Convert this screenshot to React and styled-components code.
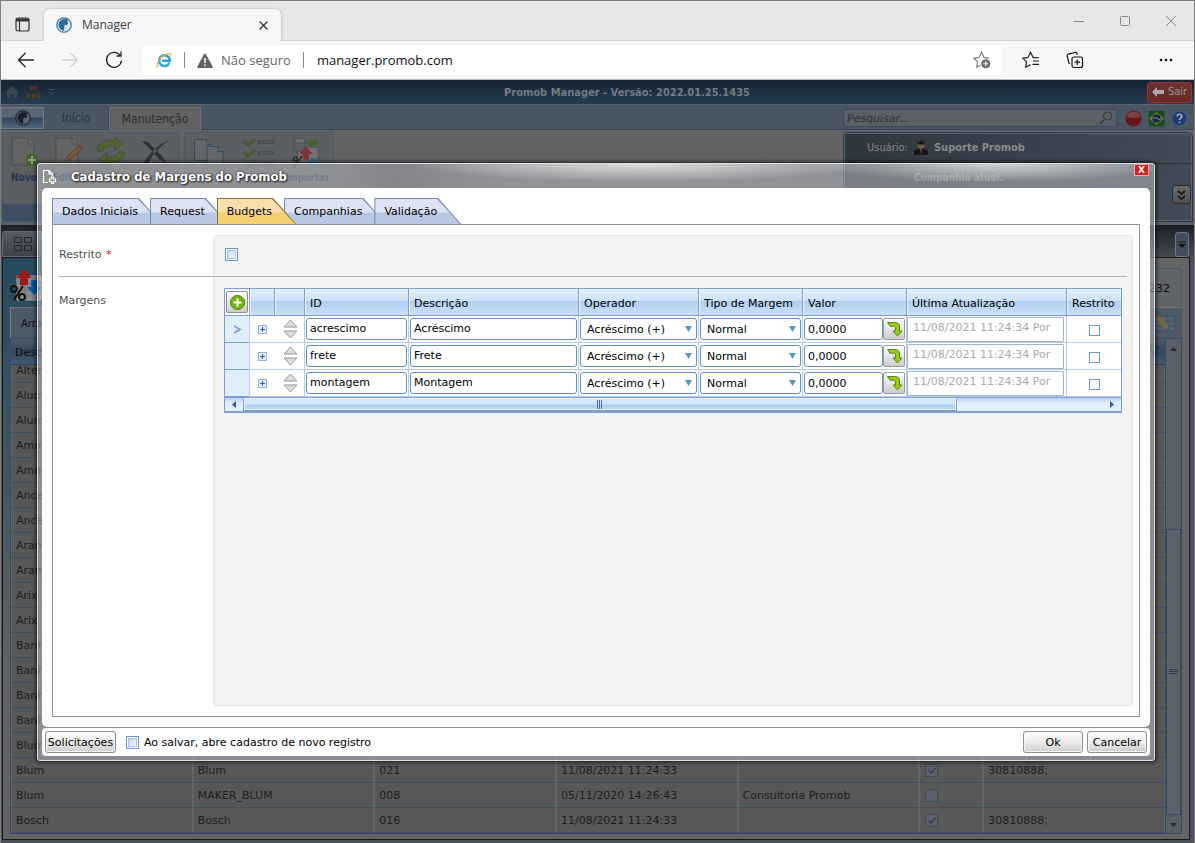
import React from 'react';
import styled, { createGlobalStyle, css } from 'styled-components';

const GlobalStyle = createGlobalStyle`
  *, *::before, *::after { box-sizing: border-box; }
  body { margin: 0; background: #e7e7e7; }
  body, button, input, select, table { font-family: "DejaVu Sans", "Verdana", sans-serif; font-size: 11px; }
  button { padding: 0; border: 0; background: none; color: inherit; cursor: pointer; }
  svg { display: block; flex: none; }
`;

/* ---------- Browser window ---------- */

const Window = styled.div`
  display: flex;
  flex-direction: column;
  min-height: 100vh;
  border: 1px solid #7f7f7f;
  border-bottom: 0;
`;

const TabStrip = styled.div`
  display: flex;
  align-items: flex-end;
  height: 40px;
  background: #e7e7e7;
  border-bottom: 1px solid #d4d4d4;
`;

const StripButton = styled.button`
  display: grid;
  place-items: center;
  width: 43px;
  height: 32px;
`;

const BrowserTab = styled.div`
  display: flex;
  align-items: center;
  gap: 10px;
  width: 237px;
  height: 32px;
  padding: 0 11px 0 12px;
  margin-bottom: -1px;
  border-radius: 6px 6px 0 0;
  background: #f7f7f7;
  box-shadow: 0 0 3px rgba(0, 0, 0, 0.25);
  clip-path: inset(-4px -4px 0 -4px);
  color: #3b3b3b;
  font: 12px/16px "Open Sans", "Noto Sans", sans-serif;

  span { flex: 1; }
`;

const WindowControls = styled.div`
  display: flex;
  align-self: center;
  margin-left: auto;

  button { display: grid; place-items: center; width: 46px; height: 32px; }
`;

const Toolbar = styled.div`
  display: flex;
  align-items: center;
  height: 39px;
  padding-right: 6px;
  background: #f7f7f7;
  border-bottom: 1px solid #bdbdbd;
`;

const ToolButton = styled.button`
  display: grid;
  place-items: center;
  width: 44px;
  height: 32px;
  margin-left: ${(p) => p.$push || 0}px;
`;

const AddressBar = styled.div`
  display: flex;
  flex: 1;
  align-items: center;
  gap: 12px;
  height: 30px;
  margin: 0 7px 0 6px;
  padding: 0 11px 0 14px;
  border-radius: 4px;
  background: #fff;
  color: #666;
  font: 13px/20px "Open Sans", "Noto Sans", sans-serif;

  i { width: 1px; height: 16px; background: #8a8a8a; }
`;

const Warning = styled.span`
  display: flex;
  align-items: center;
  gap: 8px;
`;

const Address = styled.input`
  flex: 1;
  min-width: 0;
  padding: 0 1px;
  border: 0;
  outline: 0;
  background: none;
  color: #111;
  font: 13px/20px "Open Sans", "Noto Sans", sans-serif;
`;

/* ---------- Application behind the dialog ---------- */

const Page = styled.main`
  position: relative;
  display: flex;
  flex: 1;
  flex-direction: column;
  background: #4c525c;
  color: #1a1c1f;
`;

const TitleBar = styled.header`
  display: grid;
  grid-template-columns: 1fr auto 1fr;
  align-items: center;
  height: 25px;
  padding: 0 2px 0 4px;
  background: linear-gradient(#16222f, #253c52);
  border-bottom: 1px solid #5c646d;
`;

const QuickIcons = styled.div`
  display: flex;
  align-items: center;
  gap: 7px;
`;

const AppTitle = styled.h1`
  margin: 0 0 0 57px;
  padding-top: 2px;
  color: #737b83;
  font: bold 11px/14px "DejaVu Sans Condensed", "DejaVu Sans", sans-serif;
`;

const LogoutButton = styled.button`
  display: flex;
  align-items: center;
  justify-content: center;
  justify-self: end;
  gap: 4px;
  width: 45px;
  height: 21px;
  border: 1px solid #9b3535;
  border-radius: 3px;
  background: linear-gradient(#6b3434, #6b2525);
  color: #999;
  font: 11px/14px "DejaVu Sans Condensed", sans-serif;
`;

const MenuRow = styled.nav`
  display: flex;
  align-items: center;
  height: 25px;
  padding: 2px 6px 0 0;
  background: #4b5663;
  border-bottom: 1px solid #33475f;
`;

const MenuTab = styled.button`
  display: grid;
  place-items: center;
  align-self: flex-end;
  width: ${(p) => p.$w}px;
  height: 22px;
  color: #24313f;
  font: 12px/16px "DejaVu Sans Condensed", sans-serif;
  border-right: 1px solid #33475f;
  ${(p) => p.$logo && css`
    border: 1px solid #6f7d8d;
    background: linear-gradient(#5a6674 45%, #34465c 50%, #52657a);
  `}
  ${(p) => p.$active && css`
    height: 23px;
    margin-bottom: -1px;
    border: 1px solid #707173;
    border-bottom: 0;
    border-radius: 2px 2px 0 0;
    background: #606264;
    color: #2c2c2c;
  `}
`;

const SearchBox = styled.label`
  display: flex;
  align-items: center;
  width: 274px;
  height: 18px;
  margin: 0 8px 0 auto;
  padding: 0 3px;
  border: 1px solid #364a60;
  border-radius: 3px;
  background: #5b6066;

  input {
    flex: 1;
    min-width: 0;
    padding: 1px 0 0;
    border: 0;
    background: none;
    font: italic 11px/14px "DejaVu Sans", sans-serif;
  }
  input::placeholder { color: #2e343b; opacity: 1; }
`;

const RoundIcons = styled.div`
  display: flex;
  gap: 6px;
`;

const Ribbon = styled.section`
  display: flex;
  gap: 5px;
  height: 95px;
  padding: 2px 1px 3px 1px;
  background: linear-gradient(#636464, #5a5f64);
`;

const RibbonGroup = styled.div`
  display: flex;
  width: ${(p) => p.$w}px;
  padding-top: 4px;
  border: 1px solid #475a72;
  border-radius: 2px;
  background: linear-gradient(#5c5f62 80%, #3f4e62 81%);
`;

const RibbonItem = styled.button`
  display: flex;
  flex: 1;
  flex-direction: column;
  align-items: center;
  gap: 4px;
  min-width: 0;
  height: 50px;
  padding-right: 2px;
  color: #26344f;
  font: bold 10px/13px "DejaVu Sans Condensed", sans-serif;

  svg { opacity: 0.8; }
`;

const UserPanel = styled.aside`
  display: flex;
  flex-direction: column;
  width: 350px;
  margin-left: auto;
  border: 1px solid #26364a;
  border-radius: 5px 5px 0 0;
  background: linear-gradient(100deg, #2f3640, #424b57);
  box-shadow: inset 0 0 0 1px #5d6773;
  color: #868a8f;
  font: 11px/14px "DejaVu Sans Condensed", sans-serif;
`;

const UserLine = styled.div`
  display: flex;
  align-items: center;
  gap: 5px;
  height: 31px;
  padding-left: 23px;
  border-bottom: 1px solid #26303b;
`;

const CompanyLine = styled.div`
  display: flex;
  flex-direction: column;
  padding: 7px 1px 0 70px;
  font-weight: bold;
  font-size: 10px;
  color: #6f747b;
`;

const SmallButton = styled.button`
  display: grid;
  place-items: center;
  width: ${(p) => p.$w || 19}px;
  height: ${(p) => p.$h || 19}px;
  align-self: flex-end;
  border: 1px solid ${(p) => (p.$dark ? '#71767e' : '#2b2e31')};
  border-radius: 3px;
  background: ${(p) => (p.$dark ? '#424c5b' : 'linear-gradient(#6a6a6a, #505050)')};
`;

const DocumentTabs = styled.div`
  display: flex;
  align-items: flex-end;
  justify-content: space-between;
  height: 32px;
  padding: 0 5px 0 1px;
  background: linear-gradient(#1c2028, #454a52);
`;

const DocumentTab = styled.button`
  display: flex;
  align-items: center;
  width: 90px;
  height: 26px;
  padding-left: 11px;
  border: 1px solid #666b73;
  border-radius: 3px 3px 0 0;
  background: linear-gradient(#555c66, #3c434d);
`;

const Content = styled.section`
  flex: 1;
  margin: 0 4px 3px 1px;
  padding: 0 7px;
  border: 1px solid #16181b;
  background: linear-gradient(90deg, transparent 3%, #646464 14%), linear-gradient(#264a5c, #646464 75%);
`;

const ContentHead = styled.div`
  display: flex;
  align-items: flex-end;
  justify-content: space-between;
  height: 49px;
`;

const PercentBox = styled.div`
  padding-bottom: 5px;
`;

const CountBox = styled.div`
  display: flex;
  align-items: center;
  justify-content: flex-end;
  width: 120px;
  height: 39px;
  padding-right: 11px;
  border: 1px solid #475a72;
  border-bottom: 0;
  border-radius: 3px 3px 0 0;
  background: #606468;
  color: #0c0d0f;
`;

const GroupBar = styled.div`
  display: flex;
  align-items: center;
  justify-content: space-between;
  height: 31px;
  padding: 0 6px 0 10px;
  border-left: 1px solid #7a828c;
  border-top: 1px solid #6c737c;
  background: #4e5966;
  color: #0c0d0f;
  font-size: 10px;
`;

const ListBox = styled.div`
  display: flex;
  border: 1px solid #344a63;
`;

const ListFrame = styled.div`
  flex: 1;
  min-width: 0;
`;

const ListTable = styled.table`
  width: 100%;
  table-layout: fixed;
  border-spacing: 0;

  th, td { text-align: left; overflow: hidden; white-space: nowrap; padding: 0 5px 0 4px; }
  th {
    height: 26px;
    padding-top: 1px;
    background: linear-gradient(#4f5a66, #36475c 50%, #465a70);
    border-bottom: 1px solid #2c415c;
    font-weight: normal;
    color: #0c0d0f;
  }
  th svg { margin-left: auto; }
  td {
    height: 25px;
    border-bottom: 1px solid #3b4f69;
    border-right: 1px solid #62666b;
    border-left: 1px solid #62666b;
    background: #585858;
  }
  tbody tr:first-child td { height: 18px; line-height: 12px; padding-bottom: 5px; }
  td:nth-child(6) { padding-left: 5px; }
`;

const ListScroll = styled.div`
  display: flex;
  flex-direction: column;
  align-items: center;
  justify-content: space-between;
  width: 16px;
  padding: 8px 0 6px;
  background: #5a6069;
  border-left: 1px solid #344a63;
`;

const ListThumb = styled.div`
  display: grid;
  place-items: center;
  width: 15px;
  height: 286px;
  margin: auto 0 8px;
  border: 1px solid #3c4b60;
  background: #5c626b;
`;

const CheckBox = styled.input.attrs({ type: 'checkbox' })`
  appearance: none;
  display: block;
  flex: none;
  width: ${(p) => (p.$plain ? 11 : 13)}px;
  height: ${(p) => (p.$plain ? 11 : 13)}px;
  margin: 0;
  border: 1px solid #6b97c9;
  background: #fff;
  ${(p) => !p.$plain && css`
    box-shadow: inset 0 0 0 1px #fff, inset 0 0 0 2px #a5c3e8;
    background: linear-gradient(135deg, #b9d3f1, #fff);
  `}
  ${(p) => p.$dim && css`
    border-color: #3a4b60;
    box-shadow: none;
    background: #5b5f66;
    &:checked::before {
      content: "";
      display: block;
      width: 4px;
      height: 7px;
      margin: 1px 0 0 4px;
      border: solid #2a3038;
      border-width: 0 1px 1px 0;
      transform: rotate(40deg);
    }
  `}
`;

/* ---------- Dialog ---------- */

const Dialog = styled.div`
  position: absolute;
  inset: 83px 39px 82px 36px;
  display: flex;
  flex-direction: column;
  padding: 0 4px 4px;
  border: 1px solid #dcdcdc;
  border-radius: 3px;
  background:
    radial-gradient(ellipse 230px 18px at 54% 0, rgba(255, 255, 255, 0.7), transparent),
    radial-gradient(ellipse 180px 18px at 86% 0, rgba(255, 255, 255, 0.65), transparent),
    linear-gradient(90deg, transparent, transparent 25%, rgba(40, 42, 46, 0.12) 32%, transparent 42%) 0 0 / 100% 24px no-repeat,
    rgba(195, 195, 200, 0.5);
  box-shadow: 0 0 4px 1px rgba(0, 0, 0, 0.75);
  color: #000;
`;

const DialogHead = styled.header`
  display: flex;
  align-items: flex-start;
  height: 24px;
  padding: 0 1px 0 0;

  svg { margin: 5px 14px 0 0; }
  h2 {
    flex: 1;
    margin: 0;
    padding-top: 4px;
    color: #fff;
    font: bold 13px/18px "DejaVu Sans Condensed", sans-serif;
    text-shadow: 0 0 2px #222, 1px 1px 2px #222;
  }
`;

const CloseButton = styled.button`
  width: 15px;
  height: 12px;
  border: 1px solid #e8b0b0;
  background: #cc2222;
  color: #fff;
  font: bold 9px/9px "DejaVu Sans", sans-serif;
`;

const DialogBody = styled.div`
  display: flex;
  flex: 1;
  flex-direction: column;
  padding: 10px;
  border-radius: 5px;
  background: #fff;
`;

const Tabs = styled.div`
  display: flex;
  height: 26px;
`;

const Tab = styled.button`
  position: relative;
  z-index: ${(p) => (p.$active ? 2 : 0)};
  height: 26px;
  padding: 1px 24px 0 10px;
  margin-right: -12px;
  background: ${(p) => (p.$active ? '#8d6f35' : '#7488b4')};
  clip-path: polygon(0 0, calc(100% - 23px) 0, 100% 100%, 0 100%);
  white-space: nowrap;

  &::before {
    content: "";
    position: absolute;
    z-index: -1;
    inset: 1px 1px 0 1px;
    background: ${(p) => (p.$active
      ? 'linear-gradient(#fadfae 50%, #f6cf71 58%)'
      : 'linear-gradient(#dde3f3 50%, #bac8e6 58%)')};
    clip-path: polygon(0 0, calc(100% - 23px) 0, 100% 100%, 0 100%);
  }
`;

const Panel = styled.section`
  display: grid;
  flex: 1;
  grid-template-columns: 154px minmax(0, 1fr);
  grid-template-rows: 41px 1px 1fr;
  padding: 10px 6px;
  border: 1px solid #949494;
`;

const FieldArea = styled.div`
  grid-column: 2;
  grid-row: 1 / -1;
  border: 1px solid #e4e4e4;
  border-radius: 4px;
  background: #f3f3f3;
`;

const FieldLabel = styled.label`
  grid-column: 1;
  grid-row: ${(p) => p.$row};
  padding-top: ${(p) => (p.$row === 1 ? 13 : 17)}px;
  color: #505050;
  line-height: 14px;

  em { margin-left: 1px; color: #f00; font-style: normal; }
`;

const Field = styled.div`
  grid-column: 2;
  grid-row: ${(p) => p.$row};
  padding: ${(p) => (p.$row === 1 ? '13px' : '11px')} 11px 0 ${(p) => (p.$row === 1 ? '12px' : '11px')};
`;

const Rule = styled.hr`
  grid-column: 1 / -1;
  grid-row: 2;
  width: auto;
  height: 1px;
  margin: 0 6px 0 0;
  border: 0;
  background: #b0b0b0;
`;

const GridBox = styled.div`
  border: 1px solid #7f9fd0;
  background: #fff;
`;

const GridTable = styled.table`
  width: 100%;
  table-layout: fixed;
  border-spacing: 0;

  th, td { padding: 0 1px; border-left: 1px solid #b5cdeb; }
  th:first-child, td:first-child { border-left: 0; }
  th {
    height: 27px;
    padding: 2px 0 0 5px;
    border-color: #7f9fd0;
    border-bottom: 1px solid #7f9fd0;
    background: linear-gradient(#e2eefe, #cfe2fb 44%, #b0ceef 48%, #cbe0fb);
    box-shadow: inset 1px 1px 0 #eef5ff;
    text-align: left;
    font-weight: normal;
    white-space: nowrap;
  }
  th:first-child { padding: 1px; background: #fff; }
  td { height: 27px; border-bottom: 1px solid #b5cdeb; }
  td:nth-child(3) { border-left: 0; padding-left: 4px; }
  td:first-child { padding-left: 3px; background: #e1eefc; border-bottom-color: #7f9fd0; color: #7ba0d3; box-shadow: 1px 0 0 #7f9fd0; text-align: center; }
  td:last-child { padding-top: 2px; }
`;

const TextInput = styled.input`
  display: block;
  width: 100%;
  height: 22px;
  padding: 0 3px 2px;
  border: 1px solid #5f93bf;
  border-radius: 3px;
  background: #fff;
  color: #000;
`;

const DateInput = styled(TextInput)`
  width: 100%;
  height: 25px;
  margin-left: -1px;
  padding: 0 5px 4px;
  border: 1px solid #a0b4d0;
  border-radius: 1px;
  color: #aaa;
`;

const Picker = styled.div`
  display: flex;
  align-items: center;
  width: 100%;
  height: 22px;
  padding-right: 4px;
  border: 1px solid #5f93bf;
  border-radius: 3px;

  select {
    flex: 1;
    min-width: 0;
    appearance: none;
    padding: 0 0 0 6px;
    border: 0;
    background: none;
    color: #000;
  }
`;

const ValueBox = styled.div`
  display: flex;

  input { flex: 1; min-width: 0; padding: 0 3px; }
  button {
    display: grid;
    place-items: center;
    width: 22px;
    height: 22px;
    border: 1px solid #9a9a9a;
    border-radius: 2px;
    background: linear-gradient(#fff, #ccc);
  }
`;

const Center = styled.div`
  display: flex;
  flex-direction: column;
  align-items: center;
  gap: 1px;
`;

const AddButton = styled.button`
  display: grid;
  place-items: center;
  width: 22px;
  height: 22px;
  border: 1px solid #8f8f8f;
  border-radius: 2px;
  background: linear-gradient(#fff, #ccc);
`;

const HScroll = styled.div`
  display: flex;
  height: 15px;
  background: linear-gradient(#b7cfef, #e1eefc 40%);
  border-top: 1px solid #7f9fd0;
  border-bottom: 1px solid #7f9fd0;

  button { display: grid; place-items: center; width: 18px; }
`;

const HTrack = styled.div`
  display: flex;
  flex: 1;
`;

const HThumb = styled.div`
  display: grid;
  place-items: center;
  width: 83%;
  border: 1px solid #7f9fd0;
  border-top: 0;
  background: linear-gradient(#d5e7fd 50%, #a8cdf2 60%, #c5defa);
  box-shadow: inset 0 0 0 1px #eaf3ff;
`;

const DialogFoot = styled.footer`
  display: flex;
  align-items: center;
  gap: 4px;
  height: 28px;
  margin-top: 1px;
  padding: 0 3px;
  border-radius: 4px;
  background: #fff;

  label { display: flex; align-items: center; gap: 5px; margin: 0 auto 0 6px; }
`;

const PushButton = styled.button`
  width: ${(p) => p.$w || 60}px;
  height: 22px;
  border: 1px solid #8f8f8f;
  border-radius: 3px;
  background: linear-gradient(#fdfdfd, #ebebeb 50%, #cdcdcd);
  box-shadow: inset 0 0 0 1px #f5f5f5;
  white-space: nowrap;
`;

/* ---------- Icons ---------- */

const Brand = ({ dim }) => (
  <svg width="16" height="16" viewBox="0 0 16 16">
    <circle cx="8" cy="8" r="7.2" fill={dim ? '#59646f' : '#dbe8f2'} stroke={dim ? '#1d2937' : '#3b78a8'} strokeWidth="1.3" />
    <path d="M7.500 2.300l3.200-.2 1.300 1.500-.6 1.600.8 1.200-1.200 1.600-1.700-.2L8.200 9v4.700A5.800 5.800 0 0 1 3 5.500C4 3.500 5.500 2.500 7.500 2.300z" fill={dim ? '#17202b' : '#2c6a9c'} />
  </svg>
);

const Explorer = () => (
  <svg width="16" height="16" viewBox="0 0 17 16" fill="none">
    <path d="M14.300 10.800A5.700 5.700 0 1 1 14.700 8.800H6.200" stroke="#2f9fe0" strokeWidth="2.700" />
    <path d="M3 14.800C.5 15.800.2 13 2.800 8.800 6 3.800 12.500.2 15 1.400c1 .6.6 2-.2 3.200" stroke="#efb52c" strokeWidth="1.300" />
  </svg>
);

const StarAdd = () => (
  <svg width="18" height="18" viewBox="0 0 18 18" fill="none">
    <path d="M16.500 7.200l-5.400-.8L8.500 1.300 6 6.400l-5.200.8 3.800 3.700-.9 5.300 4-2.100" stroke="#777" strokeWidth="1.100" />
    <circle cx="12.800" cy="12.800" r="4.500" fill="#6a6a6a" />
    <path d="M12.800 10.300v5M10.300 12.800h5" stroke="#fff" strokeWidth="1.100" />
  </svg>
);

const Favorites = () => (
  <svg width="18" height="18" viewBox="0 0 18 18" fill="none" stroke="#222" strokeWidth="1.200">
    <path d="M16.500 6.600h-5.300L8.500 1.300 6 6.400l-5.200.8 3.800 3.700-.9 5.300L8.500 13.600M11 10h6M10.500 13.400H17" />
  </svg>
);

const Collections = () => (
  <svg width="18" height="18" viewBox="0 0 18 18" fill="none" stroke="#111" strokeWidth="1.200">
    <rect x="6" y="6" width="10.500" height="10.500" rx="2" />
    <path d="M11.200 8.500v5.500M8.500 11.200H14M4 12.500l-1-.2L1.200 5c-.2-1 .4-1.700 1.200-1.900L9 1.500c1-.2 1.700.2 2 1.200l.3 1.200" />
  </svg>
);

const Arrow = ({ color, flip }) => (
  <svg width="18" height="16" viewBox="0 0 18 16" fill="none" stroke={color} strokeWidth="1.300">
    <path d={flip ? 'M1 8h15M9.500 1l7 7-7 7' : 'M17 8H2M8.500 1l-7 7 7 7'} />
  </svg>
);

const PageIcon = ({ children }) => (
  <svg width="30" height="30" viewBox="0 0 30 30">
    <path d="M3 1h16l6 6v21H3z" fill="#666" stroke="#45484b" />
    <path d="M19 1v6h6" fill="#707070" stroke="#45484b" />
    {children}
  </svg>
);

const NewIcon = () => (
  <PageIcon>
    <circle cx="23" cy="23" r="6.500" fill="#3e5d1d" stroke="#55713a" />
    <path d="M23 19v8M19 23h8" stroke="#a0a59b" strokeWidth="2.200" />
  </PageIcon>
);

const EditIcon = () => (
  <PageIcon>
    <path d="M13 24l1.500-5L27 8l3 3-12.500 11z" fill="#84592b" stroke="#594023" />
    <path d="M25 10l2-2 3 3-2 2z" fill="#7b4444" />
  </PageIcon>
);

const RefreshIcon = () => (
  <svg width="32" height="30" viewBox="0 0 32 30" fill="#4f672a" stroke="#3a4e20">
    <path d="M2 14C3 5 11 3 20 4V1l8 6-8 6V9c-6-1-10 0-12 5z" />
    <path d="M30 15c-1 9-9 11-18 10v3l-8-6 8-6v4c6 1 10 0 12-5z" />
  </svg>
);

const DeleteIcon = () => (
  <svg width="30" height="30" viewBox="0 0 30 30">
    <path d="M2 4l6 1c3 3 6 6 9 9 4 4 7 7 9 12l-7-4C12 14 7 9 2 4zM29 3C19 7 9 16 3 27h5C12 18 19 10 29 3z" fill="#242525" />
  </svg>
);

const CopyIcon = () => (
  <svg width="32" height="30" viewBox="0 0 32 30" fill="#666a6d" stroke="#29475a">
    <path d="M1.500 2.500h12l5 5v16h-17z" /><path d="M13.500 2.500v5h5" />
    <path d="M14 9.500h11l5 5V29H14z" /><path d="M25 9.500v5h5" />
  </svg>
);

const ChecksIcon = () => (
  <svg width="34" height="30" viewBox="0 0 34 30" fill="none">
    {[2, 13, 24].map((y) => (
      <g key={y}>
        <path d={`M3 ${y + 2}l4 4 7-6`} stroke="#435a29" strokeWidth="3" />
        <path d={`M17 ${y + 3}h16`} stroke="#34363b" strokeWidth="3" />
        <path d={`M18 ${y + 3}h14`} stroke="#777" />
      </g>
    ))}
  </svg>
);

const ImportIcon = () => (
  <svg width="32" height="30" viewBox="0 0 32 32">
    <path d="M6 11h22v16H6z" fill="#777" stroke="#4b4d50" />
    <path d="M2 4v9c2 3 10 3 12 0V4z" fill="#5d6064" stroke="#45484b" />
    <ellipse cx="8" cy="4" rx="6" ry="2.500" fill="#747678" stroke="#45484b" />
    <path d="M8 18l7-8 7 8h-4v6h-6v-6z" fill="#8a2730" />
    <path d="M15 6l6-5v3h7v5h-7v3z" fill="#3f6424" />
    <path d="M17 26h3v-3h6v3h3l-6 6z" fill="#28668a" />
    <path d="M2 31l9-11" stroke="#222" strokeWidth="1.500" />
    <circle cx="3.500" cy="23.500" r="2" stroke="#222" fill="none" strokeWidth="1.500" />
  </svg>
);

const PercentIcon = () => (
  <svg width="32" height="33" viewBox="0 0 32 33">
    <path d="M7 7h24v24H7z" fill="#85898b" stroke="#a3a6a7" />
    <path d="M7 14h24M7 21h24M15 7v24M23 7v24" stroke="#6f7477" />
    <path d="M6 9l8-9 8 9h-4v7h-8V9z" fill="#9c1821" />
    <path d="M17 18h4v-7h6v7h5l-8 8z" fill="#0b5a9b" />
    <path d="M4 31L13 17" stroke="#111" strokeWidth="2.200" />
    <circle cx="4" cy="20" r="3" fill="none" stroke="#111" strokeWidth="2" />
    <circle cx="12" cy="28" r="3" fill="none" stroke="#111" strokeWidth="2" />
  </svg>
);

const PlusBox = () => (
  <svg width="9" height="9" viewBox="0 0 9 9">
    <rect x=".5" y=".5" width="8" height="8" fill="#e6f0fc" stroke="#8db3e2" />
    <path d="M4.500 2v5M2 4.500h5" stroke="#2a5b98" />
  </svg>
);

const Sorter = () => (
  <svg width="15" height="20" viewBox="0 0 15 20" fill="#ddd" stroke="#999">
    <path d="M7.500 1L14 8H1z" /><path d="M1 12h13l-6.500 7z" />
  </svg>
);

const ApplyIcon = () => (
  <svg width="17" height="16" viewBox="0 0 17 16">
    <path d="M1.500 1.500h7c3.500 0 5 1.500 5 4.500v4h2.500l-4.500 5-4.500-5H9.500V7c0-1.300-.7-1.800-2-1.800H4z" fill="#9ecb17" stroke="#4d8412" />
  </svg>
);

/* ---------- Data ---------- */

const listRows = [
  ['Alter'], ['Alum'], ['Alum'], ['Amm'], ['Amm'], ['Ance'], ['Ance'], ['Aram'], ['Aram'], ['Arix'], ['Arix'],
  ['Banh'], ['Banh'], ['Banh'], ['Banh'], ['Blum'],
  ['Blum', 'Blum', '021', '11/08/2021 11:24:33', '', true, '30810888;'],
  ['Blum', 'MAKER_BLUM', '008', '05/11/2020 14:26:43', 'Consultoria Promob', false, ''],
  ['Bosch', 'Bosch', '016', '11/08/2021 11:24:33', '', true, '30810888;'],
];

const margins = [
  { id: 'acrescimo', name: 'Acréscimo' },
  { id: 'frete', name: 'Frete' },
  { id: 'montagem', name: 'Montagem' },
];

const dialogTabs = ['Dados Iniciais', 'Request', 'Budgets', 'Companhias', 'Validação'];

function BrowserChrome() {
  return (
    <>
      <TabStrip>
        <StripButton aria-label="Menu de guias">
          <svg width="15" height="15" viewBox="0 0 15 15" fill="none" stroke="#333" strokeWidth="1.200">
            <rect x="1" y="1" width="13" height="13" rx="2" /><path d="M1 3h13" strokeWidth="3" /><path d="M4.500 4v10" />
          </svg>
        </StripButton>
        <BrowserTab>
          <Brand />
          <span>Manager</span>
          <button aria-label="Fechar guia">
            <svg width="13" height="13" viewBox="0 0 13 13" stroke="#333" strokeWidth="1.300"><path d="M2.500 2.500l8 8M10.500 2.500l-8 8" /></svg>
          </button>
        </BrowserTab>
        <WindowControls>
          <button aria-label="Minimizar"><svg width="10" height="10" stroke="#888"><path d="M0 5.500h10" /></svg></button>
          <button aria-label="Maximizar"><svg width="10" height="10" fill="none" stroke="#888"><rect x=".5" y=".5" width="9" height="9" rx="1" /></svg></button>
          <button aria-label="Fechar"><svg width="10" height="10" stroke="#888"><path d="M0 0l10 10M10 0L0 10" /></svg></button>
        </WindowControls>
      </TabStrip>
      <Toolbar>
        <ToolButton aria-label="Voltar" $push={3}><Arrow color="#222" /></ToolButton>
        <ToolButton aria-label="Avançar"><Arrow color="#d0d0d0" flip /></ToolButton>
        <ToolButton aria-label="Atualizar">
          <svg width="18" height="18" viewBox="0 0 18 18" fill="none" stroke="#222" strokeWidth="1.300"><path d="M15.500 5A7.500 7.500 0 1 0 16.500 9.500M16 .5V5h-4.500" /></svg>
        </ToolButton>
        <AddressBar>
          <Explorer />
          <i />
          <Warning>
            <svg width="16" height="15" viewBox="0 0 16 15"><path d="M8 1.500L14.700 14H1.300z" fill="#636363" stroke="#636363" strokeWidth="2" strokeLinejoin="round" /><path d="M8 5v5M8 11.500V13" stroke="#fff" strokeWidth="1.500" /></svg>
            <span>Não seguro</span>
          </Warning>
          <i />
          <Address aria-label="Endereço" defaultValue="manager.promob.com" />
          <StarAdd />
        </AddressBar>
        <ToolButton aria-label="Favoritos"><Favorites /></ToolButton>
        <ToolButton aria-label="Coleções"><Collections /></ToolButton>
        <ToolButton aria-label="Mais" $push={47}>
          <svg width="14" height="4" fill="#111"><circle cx="2" cy="2" r="1.300" /><circle cx="7" cy="2" r="1.300" /><circle cx="12" cy="2" r="1.300" /></svg>
        </ToolButton>
      </Toolbar>
    </>
  );
}

function AppHeader() {
  return (
    <>
      <TitleBar>
        <QuickIcons>
          <svg width="14" height="14" viewBox="0 0 14 14"><path d="M1 7l6-6 6 6-1 1v5H9V9H6v4H2V8z" fill="#3c4752" /></svg>
          <svg width="15" height="14" viewBox="0 0 15 14"><path d="M4 1h7v4H4z" fill="#562f34" /><path d="M7.500 5v4M2 9V7h11v2" stroke="#333" fill="none" /><path d="M0 9h4v4H0zM5.500 9h4v4h-4zM11 9h4v4h-4z" fill="#494028" /></svg>
          <svg width="7" height="7" viewBox="0 0 7 7" fill="none" stroke="#43586c"><path d="M1 .5h5M1 3l2.500 2.500L6 3" /></svg>
        </QuickIcons>
        <AppTitle>Promob Manager - Versão: 2022.01.25.1435</AppTitle>
        <LogoutButton>
          <svg width="12" height="10" viewBox="0 0 12 10" fill="#aaa"><path d="M0 5l5-5v3h7v4H5v3z" /></svg>
          Sair
        </LogoutButton>
      </TitleBar>
      <MenuRow>
        <MenuTab $w={43} $logo aria-label="Aplicativo"><Brand dim /></MenuTab>
        <MenuTab $w={65}>Início</MenuTab>
        <MenuTab $w={92} $active>Manutenção</MenuTab>
        <SearchBox>
          <input type="search" aria-label="Pesquisar" placeholder="Pesquisar..." />
          <svg width="14" height="14" viewBox="0 0 14 14" fill="none" stroke="#373c42" strokeWidth="1.200"><circle cx="8.500" cy="5" r="4" /><path d="M5.500 8L1 13" /></svg>
        </SearchBox>
        <RoundIcons>
          <svg width="17" height="17" viewBox="0 0 17 17"><circle cx="8.500" cy="8.500" r="8" fill="#651719" /><path d="M1.500 7a7.200 7.200 0 0 1 14 0q-7 2-14 0z" fill="#7d4548" /></svg>
          <svg width="17" height="17" viewBox="0 0 17 17"><rect x=".5" y=".5" width="16" height="16" rx="3" fill="#164c25" /><path d="M8.500 2L16 8.500 8.500 15 1 8.500z" fill="#747025" /><circle cx="8.500" cy="8.500" r="4" fill="#152451" /><path d="M5 8q4-1 7 2" stroke="#8c99a5" fill="none" /></svg>
          <svg width="17" height="17" viewBox="0 0 17 17"><circle cx="8.500" cy="8.500" r="7.500" fill="#1c3d6d" stroke="#456084" /><path d="M6.200 6.600c0-3 4.700-3 4.700-.3 0 1.700-2.300 1.600-2.300 3.700M8.600 11.500v1.800" fill="none" stroke="#a2adb9" strokeWidth="1.600" /></svg>
        </RoundIcons>
      </MenuRow>
      <Ribbon>
        <RibbonGroup $w={177}>
          <RibbonItem><NewIcon />Novo</RibbonItem>
          <RibbonItem><EditIcon />Editar</RibbonItem>
          <RibbonItem><RefreshIcon />Atualizar</RibbonItem>
          <RibbonItem><DeleteIcon />Excluir</RibbonItem>
        </RibbonGroup>
        <RibbonGroup $w={150}>
          <RibbonItem><CopyIcon />Duplicar</RibbonItem>
          <RibbonItem><ChecksIcon />Replicar</RibbonItem>
          <RibbonItem><ImportIcon />Importar</RibbonItem>
        </RibbonGroup>
        <UserPanel>
          <UserLine>
            Usuário:
            <svg width="16" height="16" viewBox="0 0 16 16"><path d="M1 15V11l4-2h6l4 2v4z" fill="#14161a" /><path d="M7 9h2l-1 6z" fill="#7d4444" /><circle cx="8" cy="5" r="3.500" fill="#755a49" /><path d="M4 4q4-7 8 0-4 1-8 0" fill="#181513" /></svg>
            <strong>Suporte Promob</strong>
          </UserLine>
          <CompanyLine>
            Companhia atual:
            <SmallButton aria-label="Expandir">
              <svg width="9" height="10" viewBox="0 0 9 10" fill="none" stroke="#1c1c1c" strokeWidth="1.800"><path d="M1 1l3.500 3L8 1M1 6l3.500 3L8 6" /></svg>
            </SmallButton>
          </CompanyLine>
        </UserPanel>
      </Ribbon>
    </>
  );
}

function RecordList() {
  return (
    <>
      <DocumentTabs>
        <DocumentTab aria-label="Registros">
          <svg width="18" height="14" viewBox="0 0 18 14" fill="none" stroke="#22272e"><path d="M.5.5h7v5h-7zM10.500.5h7v5h-7zM.5 8.500h7v5h-7zM10.500 8.500h7v5h-7z" /></svg>
        </DocumentTab>
        <SmallButton $dark $w={14} $h={25} aria-label="Lista de guias">
          <svg width="8" height="8" viewBox="0 0 8 8"><path d="M0 1h8" stroke="#10151d" /><path d="M0 3h8L4 7z" fill="#10151d" /></svg>
        </SmallButton>
      </DocumentTabs>
      <Content>
        <ContentHead>
          <PercentBox><PercentIcon /></PercentBox>
          <CountBox>232</CountBox>
        </ContentHead>
        <GroupBar>
          Arras
          <svg width="24" height="17" viewBox="0 0 24 17"><path d="M1 1h22v15H1zM1 6h22M1 11h22M8 1v15M16 1v15" fill="#596370" stroke="#394f68" /><path d="M4 2l3-1 9 9v4l-4-1-9-9z" fill="#77663f" /></svg>
        </GroupBar>
        <ListBox>
          <ListFrame>
            <ListTable>
              <colgroup><col /><col /><col /><col /><col /><col width="64" /><col /></colgroup>
              <thead>
                <tr>
                  <th>Desc</th><th /><th /><th /><th /><th />
                  <th><svg width="12" height="12" viewBox="0 0 12 12" fill="none" stroke="#182d48"><path d="M1 1h10L7 6v5H5V6z" /></svg></th>
                </tr>
              </thead>
              <tbody>
                {listRows.map((row, i) => (
                  <tr key={i}>
                    {[0, 1, 2, 3, 4, 5, 6].map((c) => (
                      <td key={c}>
                        {c === 5 && row.length > 1
                          ? <CheckBox $dim defaultChecked={row[5]} aria-label={`Ativo, linha ${i + 1}`} />
                          : row[c]}
                      </td>
                    ))}
                  </tr>
                ))}
              </tbody>
            </ListTable>
          </ListFrame>
          <ListScroll>
            <svg width="7" height="4" fill="#272a2e"><path d="M0 4h7L3.500 0z" /></svg>
            <ListThumb><svg width="9" height="6" stroke="#333941"><path d="M0 .5h9M0 2.500h9M0 4.500h9" /></svg></ListThumb>
            <svg width="7" height="4" fill="#272a2e"><path d="M0 0h7L3.500 4z" /></svg>
          </ListScroll>
        </ListBox>
      </Content>
    </>
  );
}

function Select({ label, children }) {
  return (
    <Picker>
      <select aria-label={label}><option>{children}</option></select>
      <svg width="7" height="6" fill="#5f93bf"><path d="M0 0h7L3.500 6z" /></svg>
    </Picker>
  );
}

function MarginsGrid() {
  return (
    <GridBox id="margens">
      <GridTable>
        <colgroup>
          <col width="24" /><col width="25" /><col width="30" /><col width="104" /><col />
          <col width="120" /><col width="104" /><col width="104" /><col width="160" /><col width="55" />
        </colgroup>
        <thead>
          <tr>
            <th>
              <AddButton aria-label="Adicionar">
                <svg width="15" height="15" viewBox="0 0 15 15"><circle cx="7.500" cy="7.500" r="7" fill="#73b40f" stroke="#4a8010" /><path d="M7.500 3.500v8M3.500 7.500h8" stroke="#fff" strokeWidth="2" /></svg>
              </AddButton>
            </th>
            <th /><th />
            <th>ID</th><th>Descrição</th><th>Operador</th><th>Tipo de Margem</th>
            <th>Valor</th><th>Última Atualização</th><th>Restrito</th>
          </tr>
        </thead>
        <tbody>
          {margins.map((m, i) => (
            <tr key={m.id}>
              <td>{i === 0 && <Center><svg width="8" height="9" fill="none" stroke="#7ba0d3" strokeWidth="1.800"><path d="M0 1l6 3.500L0 8" /></svg></Center>}</td>
              <td><Center><PlusBox /></Center></td>
              <td><Center><Sorter /></Center></td>
              <td><TextInput aria-label="ID" defaultValue={m.id} /></td>
              <td><TextInput aria-label="Descrição" defaultValue={m.name} /></td>
              <td><Select label="Operador">Acréscimo (+)</Select></td>
              <td><Select label="Tipo de Margem">Normal</Select></td>
              <td>
                <ValueBox>
                  <TextInput aria-label="Valor" defaultValue="0,0000" />
                  <button aria-label="Aplicar"><ApplyIcon /></button>
                </ValueBox>
              </td>
              <td><DateInput readOnly aria-label="Última Atualização" defaultValue="11/08/2021 11:24:34 Por" /></td>
              <td><Center><CheckBox $plain aria-label="Restrito" /></Center></td>
            </tr>
          ))}
        </tbody>
      </GridTable>
      <HScroll>
        <button aria-label="Rolar para a esquerda"><svg width="4" height="7" fill="#2a5b98"><path d="M4 0v7L0 3.500z" /></svg></button>
        <HTrack>
          <HThumb><svg width="6" height="9" stroke="#4a6f9f"><path d="M.5 0v9M2.500 0v9M4.500 0v9" /></svg></HThumb>
        </HTrack>
        <button aria-label="Rolar para a direita"><svg width="4" height="7" fill="#2a5b98"><path d="M0 0v7l4-3.500z" /></svg></button>
      </HScroll>
    </GridBox>
  );
}

function MarginDialog() {
  return (
    <Dialog role="dialog" aria-labelledby="dialog-title">
      <DialogHead>
        <svg width="15" height="15" viewBox="0 0 15 15" fill="none" stroke="#fff" strokeWidth="1.200">
          <path d="M6 13.500H1.500v-12H7l3.500 3.500v2M7 1.500V5h3.500" /><path d="M9.500 8h2v2h2v2.500h-2v1.800h-2v-1.800h-2V10h2z" />
        </svg>
        <h2 id="dialog-title">Cadastro de Margens do Promob</h2>
        <CloseButton aria-label="Fechar">X</CloseButton>
      </DialogHead>
      <DialogBody>
        <Tabs role="tablist">
          {dialogTabs.map((name) => (
            <Tab key={name} role="tab" aria-selected={name === 'Budgets'} $active={name === 'Budgets'}>{name}</Tab>
          ))}
        </Tabs>
        <Panel>
          <FieldArea />
          <FieldLabel $row={1} htmlFor="restrito">Restrito <em>*</em></FieldLabel>
          <Field $row={1}><CheckBox id="restrito" /></Field>
          <Rule />
          <FieldLabel $row={3} as="div">Margens</FieldLabel>
          <Field $row={3}><MarginsGrid /></Field>
        </Panel>
      </DialogBody>
      <DialogFoot>
        <PushButton $w={71}>Solicitações</PushButton>
        <label><CheckBox />Ao salvar, abre cadastro de novo registro</label>
        <PushButton>Ok</PushButton>
        <PushButton>Cancelar</PushButton>
      </DialogFoot>
    </Dialog>
  );
}

export default function App() {
  return (
    <>
      <GlobalStyle />
      <Window>
        <BrowserChrome />
        <Page>
          <AppHeader />
          <RecordList />
          <MarginDialog />
        </Page>
      </Window>
    </>
  );
}
